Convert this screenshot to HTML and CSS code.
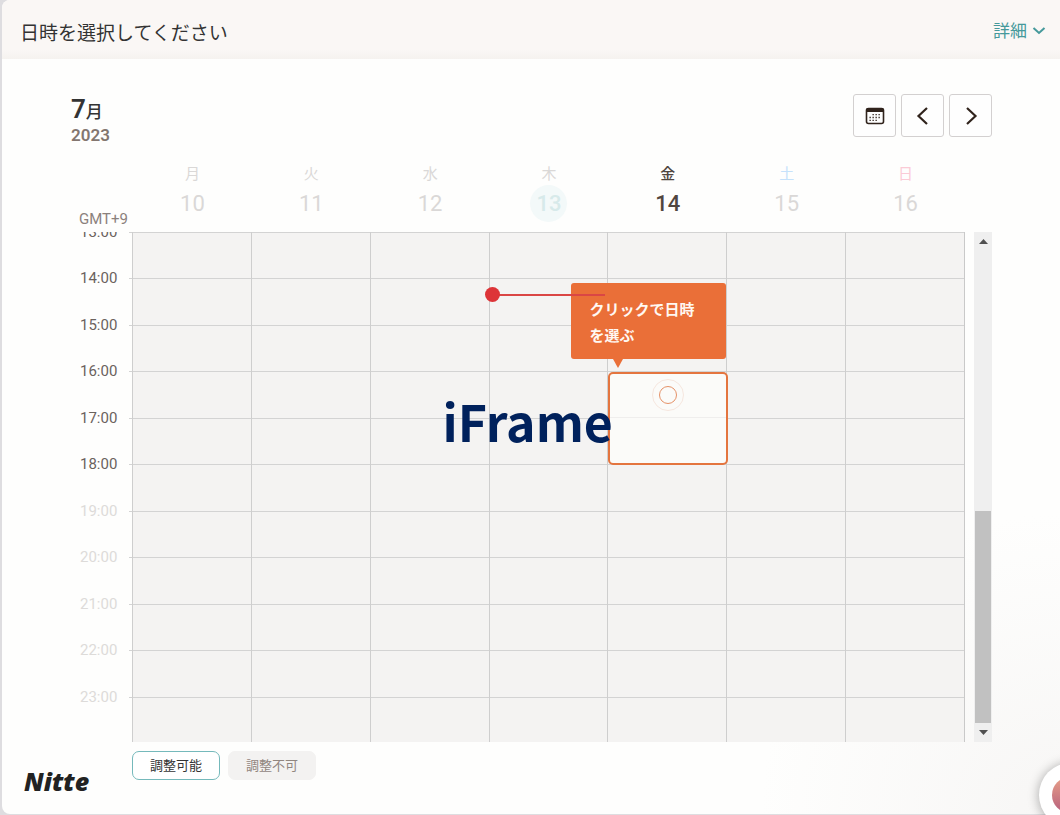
FILE: index.html
```html
<!DOCTYPE html>
<html lang="ja">
<head>
<meta charset="utf-8">
<title>Nitte</title>
<link rel="stylesheet" href="styles.css">
</head>
<body>
<main class="card">
  <header class="topbar">
    <h1 class="title">日時を選択してください</h1>
    <button class="details" type="button">詳細
      <svg width="14" height="14" viewBox="0 0 14 14" fill="none" stroke="currentColor" stroke-width="2"><path d="M1.500 5L7 10l5.500-5"/></svg>
    </button>
  </header>
  <section class="content">
    <div class="toolbar">
      <div class="period">
        <div class="month"><span class="month-number">7</span>月</div>
        <div class="year">2023</div>
      </div>
      <div class="nav">
        <button class="nav-button" type="button" aria-label="カレンダー">
          <svg width="20" height="18" viewBox="0 0 20 18"><rect x="1.5" y="1.5" width="17" height="15" rx="2" fill="none" stroke="#30231c" stroke-width="1.6"/><path d="M1 5V3a2 2 0 0 1 2-2h14a2 2 0 0 1 2 2v2z" fill="#30231c"/><g stroke="#30231c" stroke-width="1.3" stroke-dasharray="1.3 1.7"><path d="M7.5 7.7h8.500M4.500 10.500h11.500M4.500 13.300h8"/></g></svg>
        </button>
        <button class="nav-button" type="button" aria-label="前の週">
          <svg width="20" height="20" viewBox="0 0 20 20" fill="none" stroke="#30231c" stroke-width="2.2"><path d="M14 2L5.500 10l8.500 8"/></svg>
        </button>
        <button class="nav-button" type="button" aria-label="次の週">
          <svg width="20" height="20" viewBox="0 0 20 20" fill="none" stroke="#30231c" stroke-width="2.2"><path d="M6 2l8.500 8L6 18"/></svg>
        </button>
      </div>
    </div>
    <div class="week">
      <div class="zone">GMT+9</div>
      <div class="days">
        <div class="day">月<span class="date">10</span></div>
        <div class="day">火<span class="date">11</span></div>
        <div class="day">水<span class="date">12</span></div>
        <div class="day today">木<span class="date">13</span></div>
        <div class="day open">金<span class="date">14</span></div>
        <div class="day saturday">土<span class="date">15</span></div>
        <div class="day sunday">日<span class="date">16</span></div>
      </div>
    </div>
    <div class="schedule">
      <div class="hours">
        <span class="hour">13:00</span><span class="hour">14:00</span><span class="hour">15:00</span><span class="hour">16:00</span><span class="hour">17:00</span><span class="hour">18:00</span><span class="hour off">19:00</span><span class="hour off">20:00</span><span class="hour off">21:00</span><span class="hour off">22:00</span><span class="hour off">23:00</span>
      </div>
      <div class="grid">
        <div class="rows"><i></i><i></i><i></i><i></i><i></i><i></i><i></i><i></i><i></i><i></i><i></i></div>
        <div class="columns"><i></i><i></i><i></i><i></i><i></i><i></i><i></i></div>
        <button class="slot" type="button" aria-label="14日 16:00 - 18:00"><span class="ring"></span></button>
        <div class="tip">クリックで日時を選ぶ</div>
        <div class="now"></div>
        <div class="frame-label">iFrame</div>
      </div>
      <div class="scrollbar">
        <svg class="arrow" width="9" height="5" viewBox="0 0 9 5"><path d="M0 5l4.500-5L9 5z" fill="#505050"/></svg>
        <div class="track"><div class="thumb"></div></div>
        <svg class="arrow" width="9" height="5" viewBox="0 0 9 5"><path d="M0 0l4.500 5L9 0z" fill="#505050"/></svg>
      </div>
    </div>
    <footer class="footer">
      <div class="logo">Nitte</div>
      <span class="legend available">調整可能</span>
      <span class="legend unavailable">調整不可</span>
    </footer>
  </section>
</main>
<button class="chat" type="button" aria-label="チャット"><span class="chat-dot"></span></button>
</body>
</html>
```

FILE: styles.css
```css
* { box-sizing: border-box; }

body {
  margin: 0;
  height: 100vh;
  padding: 0 0 1px 2px;
  overflow: hidden;
  background: #dedde0;
  font-family: Roboto, "Noto Sans CJK JP", sans-serif;
  color: #333;
}

button { padding: 0; font: inherit; cursor: pointer; }

.card {
  height: 100%;
  display: flex;
  flex-direction: column;
  overflow: hidden;
  border-radius: 8px 0 0 8px;
  background: radial-gradient(circle at 100% 100%, #f7f6f5 0, #fefefd 300px);
}

.topbar {
  flex: none;
  height: 59px;
  padding: 0 14px 0 18px;
  display: flex;
  align-items: center;
  justify-content: space-between;
  background: linear-gradient(#faf7f5 85%, #f5f2ef);
}

.title {
  margin: 8px 0 0;
  font-size: 19px;
  line-height: 28px;
  font-weight: 400;
}

.details {
  display: flex;
  align-items: center;
  gap: 5px;
  border: 0;
  background: none;
  color: #45999b;
  font-size: 17px;
}

.content {
  flex: 1;
  min-height: 0;
  display: flex;
  flex-direction: column;
  padding: 35px 68px 20px 22px;
}

.toolbar { display: flex; justify-content: space-between; height: 70px; }
.period { padding-left: 47px; }

.month { height: 31px; font-size: 17px; line-height: 31px; font-weight: 500; }
.month-number { font-size: 26px; font-weight: 600; }
.year { font-size: 17px; line-height: 20px; font-weight: 600; color: #83766f; }

.nav { display: flex; gap: 5px; }

.nav-button {
  width: 43px;
  height: 43px;
  display: grid;
  place-items: center;
  border: 1px solid #d3d0d0;
  border-radius: 3px;
  background: #fefefe;
}

.week { display: flex; height: 68px; padding-right: 27px; }

.zone {
  width: 109px;
  padding: 46px 0 0 55px;
  font-size: 15px;
  line-height: 18px;
  color: #8b817c;
}

.days { flex: 1; display: grid; grid-template-columns: repeat(7, 1fr); }

.day {
  display: flex;
  flex-direction: column;
  align-items: center;
  font-size: 15px;
  line-height: 21px;
  color: #dad8d7;
}

.date {
  width: 37px;
  height: 37px;
  border-radius: 50%;
  font-size: 22px;
  line-height: 37px;
  text-align: center;
}

.today .date { background: #f3f9f9; color: #d7eaea; font-weight: 500; }
.open { color: #51463f; font-weight: 500; }
.saturday { color: #c6e2fb; }
.sunday { color: #fbcbd6; }
.saturday .date, .sunday .date { color: #dad8d7; }

.schedule { flex: 1; min-height: 0; display: flex; overflow: hidden; }

.hours {
  width: 109px;
  padding-left: 56px;
  display: flex;
  flex-direction: column;
}

.hour {
  flex: none;
  height: 46px;
  font-size: 15px;
  line-height: 1px;
  color: #6b625d;
}

.hour:nth-child(even) { height: 47px; }
.hour.off { color: #dddbd9; }

.grid {
  position: relative;
  flex: 1;
  border-top: 1px solid #c9c9c9;
  background: #f4f3f2;
}

.rows, .columns { position: absolute; inset: -1px 0 0; overflow: hidden; }
.rows { left: -4px; }
.rows i { display: block; height: 46px; border-top: 1px solid #d3d3d3; }
.rows i:nth-child(even) { height: 47px; }
.columns { display: grid; grid-template-columns: repeat(7, 1fr); left: -1px; right: -1px; }
.columns i { border-left: 1px solid #cecece; }
.columns { border-right: 1px solid #c9c9c9; right: 0; }

.slot {
  position: absolute;
  top: 139px;
  left: calc(100% * 4 / 7);
  width: calc(100% / 7 + 1px);
  height: 93px;
  padding-top: 5px;
  display: flex;
  justify-content: center;
  border: 2px solid #e4753f;
  border-radius: 5px;
  background: linear-gradient(#fbfbf9 43px, #efeeed 43px, #efeeed 44px, #fbfbf9 44px);
}

.ring {
  width: 32px;
  height: 32px;
  display: grid;
  place-items: center;
  border: 1px solid #f6e7df;
  border-radius: 50%;
}

.ring::before {
  content: "";
  width: 16px;
  height: 16px;
  border: 1px solid #e59268;
  border-radius: 50%;
}

.tip {
  position: absolute;
  top: 50px;
  left: calc(100% * 4 / 7 - 37px);
  width: 155px;
  padding: 14px 18px 10px;
  border-radius: 3px;
  background: #ea6f38;
  color: #fff8f2;
  font-size: 15px;
  line-height: 26px;
  font-weight: 700;
}

.tip::after {
  content: "";
  position: absolute;
  top: 100%;
  left: 42px;
  border: 5px solid transparent;
  border-top: 9px solid #ea6f38;
  border-bottom: 0;
}

.now {
  position: absolute;
  top: 61px;
  left: calc(100% * 3 / 7);
  width: 115px;
  height: 2px;
  background: #da4645;
}

.now::before {
  content: "";
  position: absolute;
  top: -7px;
  left: -5px;
  width: 15px;
  height: 15px;
  border-radius: 50%;
  background: #dd3438;
}

.frame-label {
  position: absolute;
  top: 149px;
  left: calc(100% * 3 / 7 - 47px);
  font-family: "Noto Sans CJK JP", sans-serif;
  font-size: 50px;
  line-height: 76px;
  font-weight: 700;
  color: #00215c;
}

.scrollbar {
  width: 18px;
  margin-left: 9px;
  display: flex;
  flex-direction: column;
  align-items: center;
  background: #efefef;
}

.arrow { flex: none; margin: 7px 0; }
.track { flex: 1; width: 16px; display: flex; align-items: flex-end; }
.thumb { width: 100%; height: 45%; background: #c1c1c1; }

.footer { flex: none; display: flex; height: 52px; padding-top: 9px; gap: 8px; }

.logo {
  width: 100px;
  padding-top: 16px;
  font-family: "Open Sans", sans-serif;
  font-size: 25px;
  line-height: 28px;
  font-style: italic;
  font-weight: 800;
  color: #222;
}

.legend {
  width: 88px;
  height: 29px;
  border: 1px solid #f3f2f1;
  border-radius: 7px;
  font-size: 13px;
  line-height: 28px;
  text-align: center;
}

.available { border-color: #75b9bb; background: #fff; }
.unavailable { background: #f3f2f1; color: #91867f; }

.chat {
  position: absolute;
  right: -41px;
  bottom: -12px;
  width: 62px;
  height: 64px;
  padding-left: 13px;
  border: 0;
  border-radius: 50%;
  background: #fff;
  box-shadow: 0 1px 12px #0005;
}

.chat-dot {
  display: block;
  width: 36px;
  height: 36px;
  border-radius: 50%;
  background: linear-gradient(#e8a089, #b65f7c);
}
```
